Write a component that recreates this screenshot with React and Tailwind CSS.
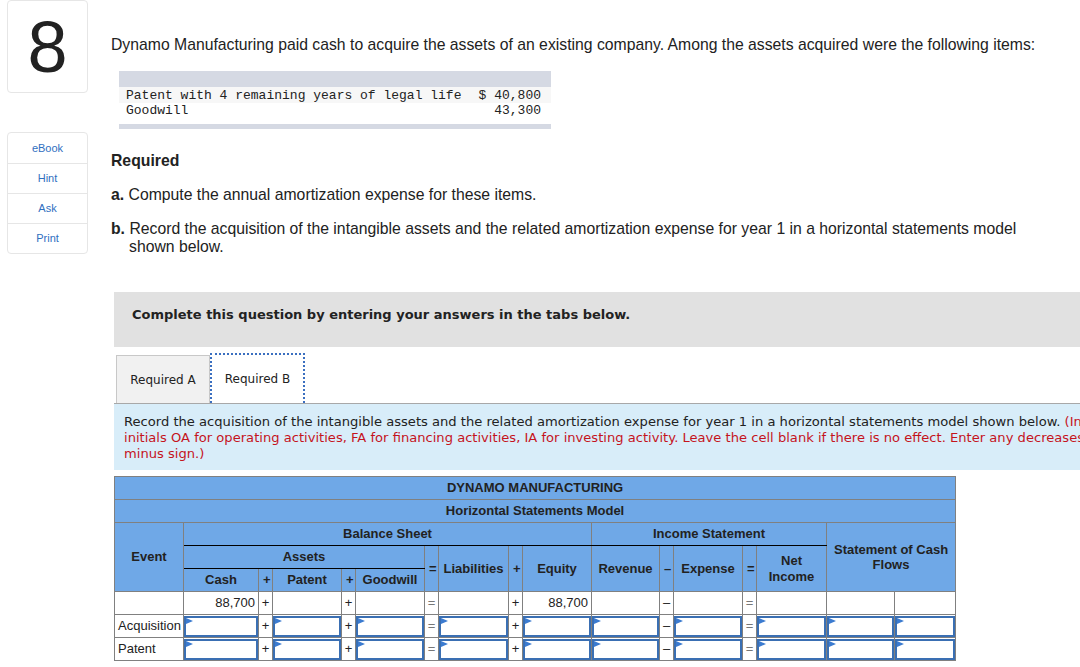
import React from 'react'

const widths = [69, 75, 14, 69, 14, 69, 14, 70, 14, 69, 68, 14, 69, 14, 70, 68, 61]
const cols = ['v', '+', 'v', '+', 'v', '=', 'v', '+', 'v', 'v', '–', 'v', '=', 'v', 'v', 'v']

const cell = 'border border-[#808080] p-0'
const head = 'border border-[#808080] px-1 text-center font-bold text-[13px] text-[#222]'

function Flag() {
  return (
    <svg className="absolute left-0 top-0" width="7" height="7" viewBox="0 0 7 7">
      <polygon points="0,0 7,3 0,6" fill="#3b7bd0" />
    </svg>
  )
}

function DataRow({ label, values = {}, input }) {
  return (
    <tr className="h-[23px]">
      <td className={`${cell} px-[3px] text-[13px] text-[#222]`}>{label}</td>
      {cols.map((c, i) => {
        if (c !== 'v') {
          return (
            <td key={i} className={`${cell} text-center text-[13px] ${c === '=' ? 'text-[#777]' : 'text-[#222]'}`}>
              {c}
            </td>
          )
        }
        if (input) {
          return (
            <td key={i} className={cell}>
              <div className="relative h-[21px] border-2 border-[#3a6fb3] bg-white">
                <Flag />
              </div>
            </td>
          )
        }
        return (
          <td key={i} className={`${cell} px-[3px] text-right text-[13px] text-[#222]`}>
            {values[i] || ''}
          </td>
        )
      })}
    </tr>
  )
}

function ModelTable() {
  return (
    <table className="ml-[3px] table-fixed border-collapse bg-white font-['Liberation_Sans',Arial,sans-serif]" style={{ width: 841 }}>
      <colgroup>
        {widths.map((w, i) => (
          <col key={i} style={{ width: w }} />
        ))}
      </colgroup>
      <thead className="bg-[#6fa8e7]">
        <tr className="h-[23px]">
          <th colSpan={17} className={head}>DYNAMO MANUFACTURING</th>
        </tr>
        <tr className="h-[23px]">
          <th colSpan={17} className={head}>Horizontal Statements Model</th>
        </tr>
        <tr className="h-[23px]">
          <th rowSpan={3} className={head}>Event</th>
          <th colSpan={9} className={`${head} border-b-black`}>Balance Sheet</th>
          <th colSpan={5} className={`${head} border-b-black`}>Income Statement</th>
          <th colSpan={2} rowSpan={3} className={`${head} leading-[15px]`}>Statement of Cash Flows</th>
        </tr>
        <tr className="h-[23px]">
          <th colSpan={5} className={`${head} border-b-black`}>Assets</th>
          <th rowSpan={2} className={`${head} px-0`}>=</th>
          <th rowSpan={2} className={`${head} px-0`}>Liabilities</th>
          <th rowSpan={2} className={`${head} px-0`}>+</th>
          <th rowSpan={2} className={head}>Equity</th>
          <th rowSpan={2} className={`${head} px-0`}>Revenue</th>
          <th rowSpan={2} className={`${head} px-0`}>–</th>
          <th rowSpan={2} className={`${head} px-0`}>Expense</th>
          <th rowSpan={2} className={`${head} px-0`}>=</th>
          <th rowSpan={2} className={`${head} leading-[16px]`}>Net Income</th>
        </tr>
        <tr className="h-[23px]">
          <th className={head}>Cash</th>
          <th className={`${head} px-0`}>+</th>
          <th className={head}>Patent</th>
          <th className={`${head} px-0`}>+</th>
          <th className={`${head} px-0`}>Goodwill</th>
        </tr>
      </thead>
      <tbody>
        <DataRow label="" values={{ 0: '88,700', 8: '88,700' }} />
        <DataRow label="Acquisition" input />
        <DataRow label="Patent" input />
      </tbody>
    </table>
  )
}

export default function App() {
  return (
    <div className="flex h-[667px] w-[1080px] overflow-hidden bg-white text-[#222] font-['Liberation_Sans',Arial,sans-serif]">
      {/* side column */}
      <aside className="w-[111px] shrink-0 pl-[7px]">
        <div className="flex h-[93px] w-[81px] items-center justify-center rounded-[4px] border border-[#e6e6e6] text-[72px] leading-none text-[#222]">
          8
        </div>
        <nav className="mt-[39px] w-[81px] rounded-[4px] border border-[#e6e6e6] text-[11px] text-[#2f6fbf]">
          {['eBook', 'Hint', 'Ask', 'Print'].map((t, i) => (
            <div key={t} className={`flex h-[30px] items-center justify-center ${i ? 'border-t border-[#e6e6e6]' : ''}`}>
              {t}
            </div>
          ))}
        </nav>
      </aside>

      <main className="min-w-0 flex-1 pt-[36px]">
        <div className="w-[960px] text-[15.75px] leading-[18px]">
          <p>
            Dynamo Manufacturing paid cash to acquire the assets of an existing company. Among the assets acquired were the following items:
          </p>

          <div className="mt-[17px] ml-[8px] w-[432px] font-['Liberation_Mono',monospace] text-[13px] leading-[15px] text-[#222]">
            <div className="h-[16px] bg-[#d5d9e3]" />
            <div className="flex justify-between bg-[#f7f7f7] pl-[7px] pr-[10px] pt-[1px]">
              <span>Patent with 4 remaining years of legal life</span>
              <span>$ 40,800</span>
            </div>
            <div className="flex justify-between pl-[7px] pr-[10px] pb-[6px]">
              <span>Goodwill</span>
              <span>43,300</span>
            </div>
            <div className="h-[5px] bg-[#d5d9e3]" />
          </div>

          <h2 className="mt-[23px] font-bold">Required</h2>
          <p className="mt-[16px]">
            <b>a.</b> Compute the annual amortization expense for these items.
          </p>
          <p className="mt-[16px] w-[915px] pl-[18px] -indent-[18px]">
            <b>b.</b> Record the acquisition of the intangible assets and the related amortization expense for year 1 in a horizontal statements model shown below.
          </p>
        </div>

        <div className="mt-[36px] ml-[3px] h-[55px] w-[1000px] bg-[#e1e1e1] pl-[18px] pt-[15px] font-['DejaVu_Sans',Verdana,sans-serif] text-[13px] font-bold leading-[16px]">
          Complete this question by entering your answers in the tabs below.
        </div>

        <div className="mt-[6px] ml-[5px] flex items-end font-['DejaVu_Sans',Verdana,sans-serif] text-[12px]">
          <div className="flex h-[48px] w-[94px] items-center justify-center border border-b-0 border-[#c8c8c8] bg-[#f1f1f1]">
            Required A
          </div>
          <div className="flex h-[50px] w-[95px] items-center justify-center border-2 border-b-0 border-dotted border-[#3a6fc0] bg-white">
            Required B
          </div>
        </div>

        <div className="ml-[3px] w-[1000px] border-t border-[#a8a8a8] bg-[#d8edf9] pl-[10px] pt-[10px] pb-[8px] font-['DejaVu_Sans',Verdana,sans-serif] text-[13.1px] leading-[16px]">
          <div className="whitespace-nowrap">
            Record the acquisition of the intangible assets and the related amortization expense for year 1 in a horizontal statements model shown below. <span className="text-[#c5141d]">(Indicate cash flow classifications using the</span>
          </div>
          <div className="whitespace-nowrap text-[#c5141d]">
            initials OA for operating activities, FA for financing activities, IA for investing activity. Leave the cell blank if there is no effect. Enter any decreases with a
          </div>
          <div className="whitespace-nowrap text-[#c5141d]">minus sign.)</div>
        </div>

        <div className="mt-[6px]">
          <ModelTable />
        </div>
      </main>
    </div>
  )
}
